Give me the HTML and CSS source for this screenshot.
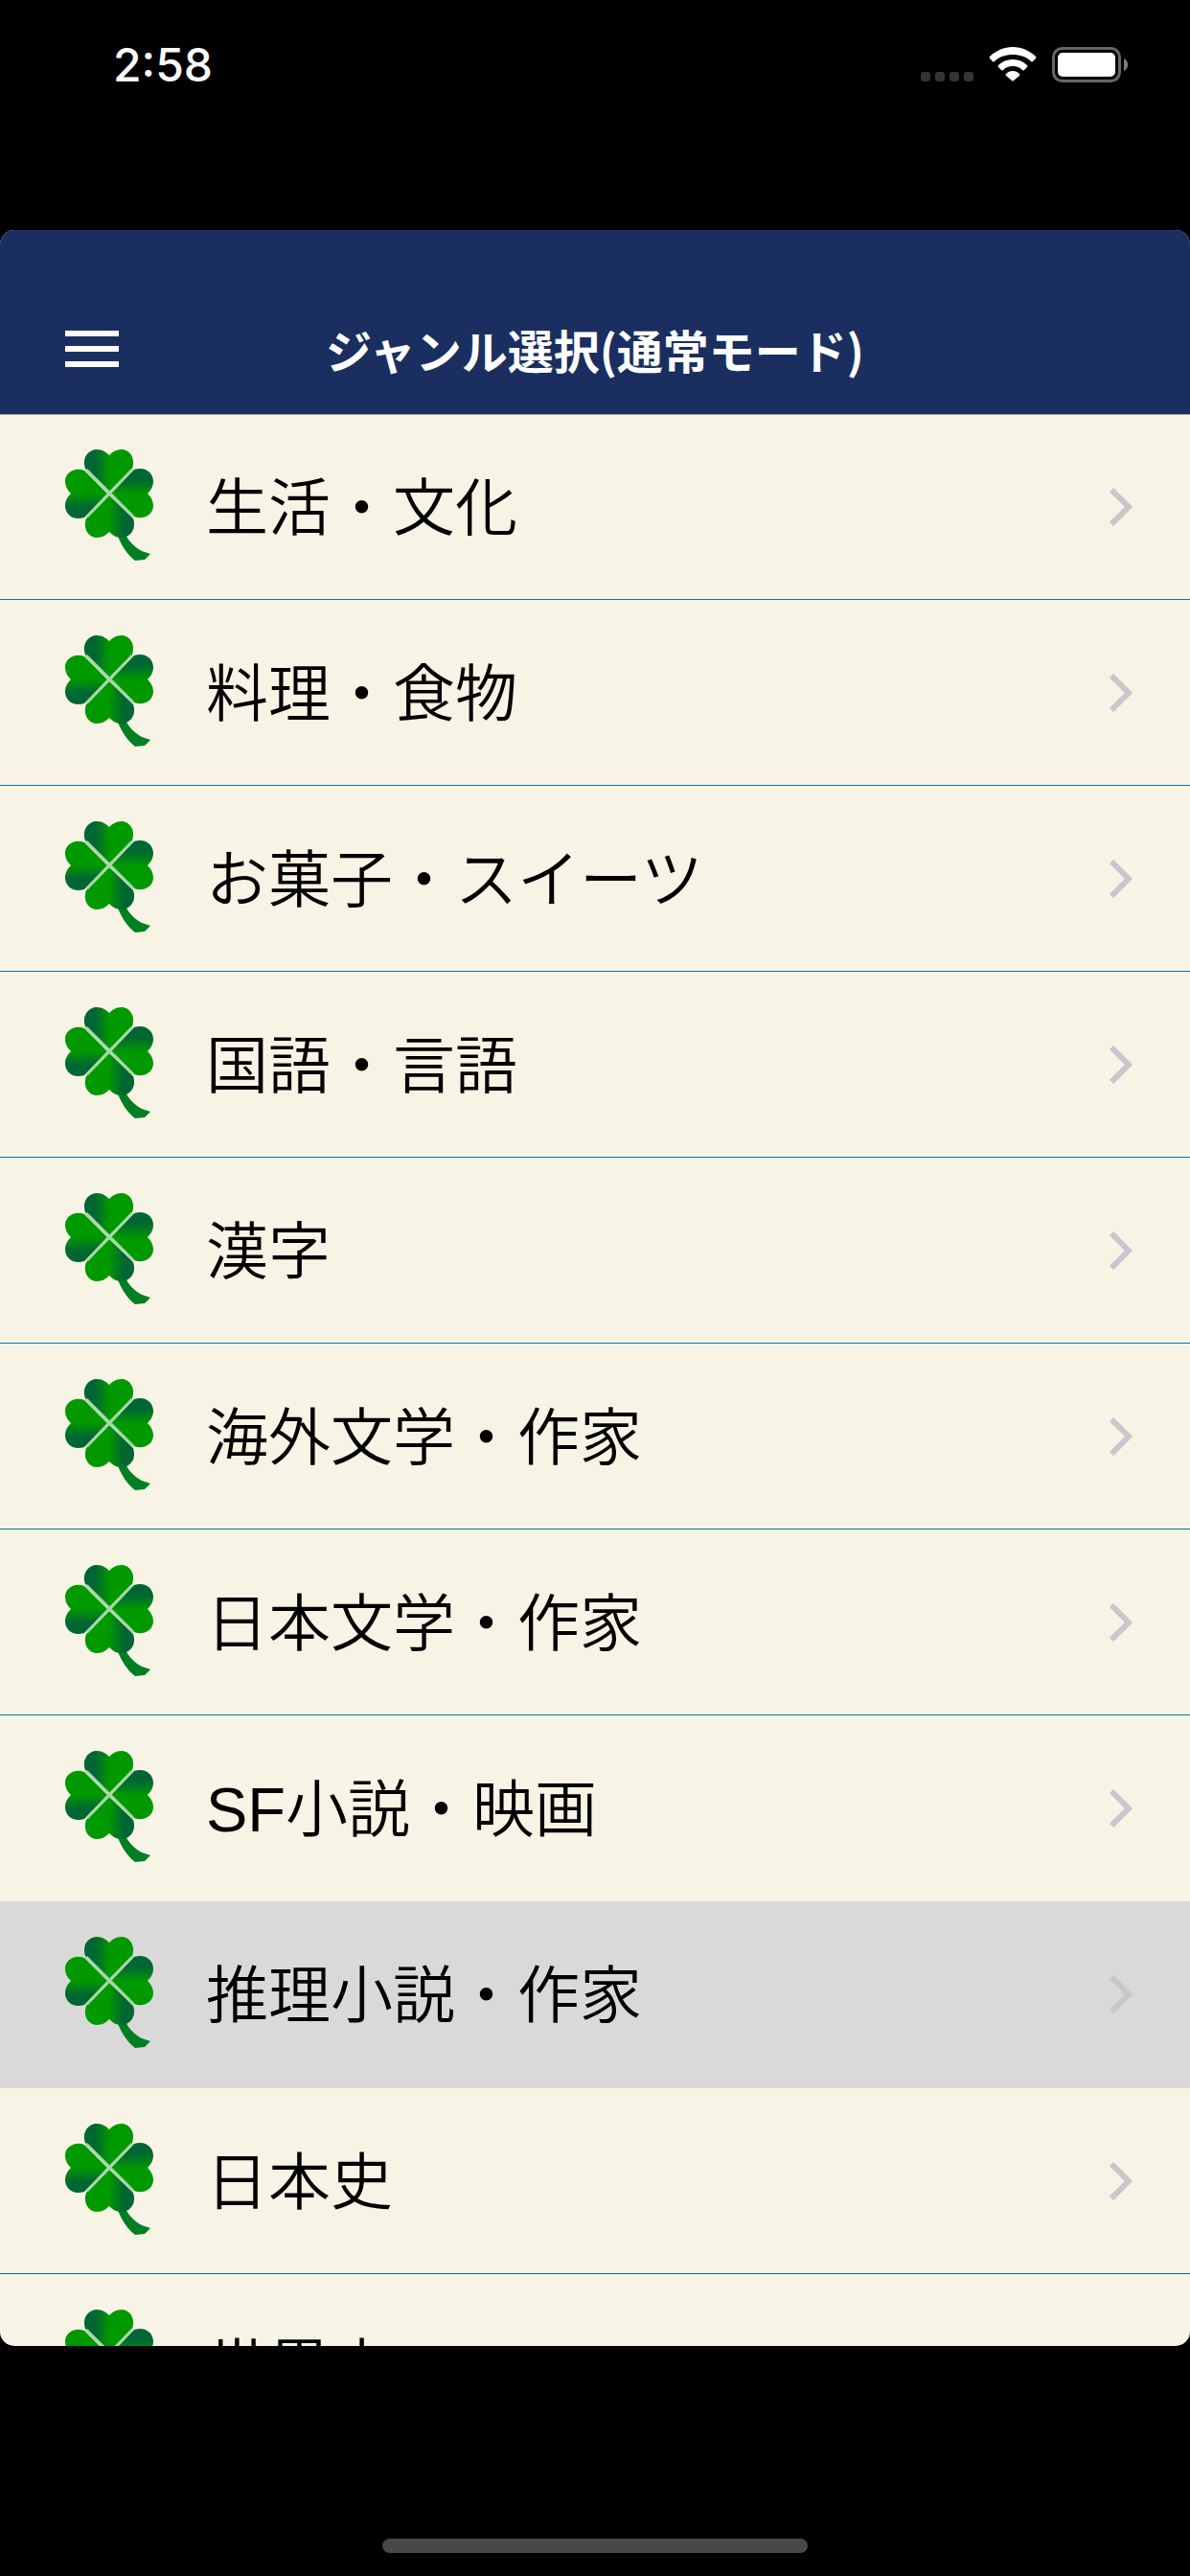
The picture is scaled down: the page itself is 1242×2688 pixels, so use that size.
FILE: index.html
```html
<!DOCTYPE html>
<html lang="ja">
<head>
<meta charset="utf-8">
<meta name="viewport" content="width=device-width, initial-scale=1">
<title>ジャンル選択</title>
<link rel="stylesheet" href="styles.css">
</head>
<body>
<svg class="defs" aria-hidden="true">
  <defs>
    <linearGradient id="leaf-shade" x1="0" x2="1" y1="0" y2="0">
      <stop offset="0.22" stop-color="#006633"/>
      <stop offset="0.52" stop-color="#009900"/>
    </linearGradient>
    <path id="leaf" fill="url(#leaf-shade)" d="M0 -2 L-25 -26 C-29 -38 -21 -46 -13 -46 C-7 -46 -3 -43 0 -40 C3 -43 7 -46 13 -46 C21 -46 28 -37 24 -26 Z"/>
    <symbol id="clover" viewBox="0 0 96 120">
      <path fill="#007f22" d="M55 88 L64 88 C67 96 74 102 81 106 L90 109 L84 115 L74 116 C65 109 59 99 55 88Z"/>
      <g transform="translate(47 46)">
        <use href="#leaf"/>
        <use href="#leaf" transform="rotate(90)"/>
        <use href="#leaf" transform="rotate(180)"/>
        <use href="#leaf" transform="rotate(270)"/>
        <path fill="none" stroke="#a5d8a5" stroke-width="3" d="M-24 -25 L25 24 M24 -25 L-23 24"/>
      </g>
    </symbol>
    <symbol id="chevron" viewBox="0 0 24 40">
      <path d="M2 2 L20 20 L2 38" fill="none" stroke="#c7c7cc" stroke-width="6"/>
    </symbol>
  </defs>
</svg>
<div class="screen">
  <div class="status">
    <time class="clock">2:58</time>
    <div class="indicators">
      <svg class="signal" viewBox="0 0 55 10" aria-label="圏外"><g fill="#333"><rect width="10" height="10" rx="3"/><rect x="15" width="10" height="10" rx="3"/><rect x="30" width="10" height="10" rx="3"/><rect x="45" width="10" height="10" rx="3"/></g></svg>
      <svg class="wifi" viewBox="0 0 50 36" aria-label="Wi-Fi"><g fill="#fff"><path d="M25 0C34 0 43 4 49 10Q50 11 49 12L46 15Q45 16 44 15C39 10 32 8 25 8S11 10 6 15Q5 16 4 15L1 12Q0 11 1 10C7 4 16 0 25 0Z"/><path d="M25 13C31 13 36 15 40 19Q41 20 40 21L37 24Q36 25 35 24C32 21 29 20 25 20S18 21 15 24Q14 25 13 24L10 21Q9 20 10 19C14 15 19 13 25 13Z"/><path d="M25 25C28 25 30 26 32 28Q33 29 32 30L26 35Q25 36 24 35L18 30Q17 29 18 28C20 26 22 25 25 25Z"/></g></svg>
      <svg class="battery" viewBox="0 0 80 38" aria-label="バッテリー"><rect x="1.5" y="1.5" width="69" height="34" rx="9" fill="none" stroke="#666" stroke-width="3"/><rect x="6" y="6" width="60" height="25" rx="5" fill="#fff"/><path d="M75 12Q79 14 79 18.500T75 25Z" fill="#808080"/></svg>
    </div>
  </div>
  <main class="app">
    <header class="bar">
      <button class="menu" type="button" aria-label="メニュー"><span></span><span></span><span></span></button>
      <h1 class="title">ジャンル選択(通常モード)</h1>
    </header>
    <nav class="list">
      <a class="row" href="#life"><svg class="clover"><use href="#clover"/></svg><span class="label">生活・文化</span><svg class="chevron"><use href="#chevron"/></svg></a>
      <a class="row" href="#food"><svg class="clover"><use href="#clover"/></svg><span class="label">料理・食物</span><svg class="chevron"><use href="#chevron"/></svg></a>
      <a class="row" href="#sweets"><svg class="clover"><use href="#clover"/></svg><span class="label">お菓子・スイーツ</span><svg class="chevron"><use href="#chevron"/></svg></a>
      <a class="row" href="#language"><svg class="clover"><use href="#clover"/></svg><span class="label">国語・言語</span><svg class="chevron"><use href="#chevron"/></svg></a>
      <a class="row" href="#kanji"><svg class="clover"><use href="#clover"/></svg><span class="label">漢字</span><svg class="chevron"><use href="#chevron"/></svg></a>
      <a class="row" href="#world-literature"><svg class="clover"><use href="#clover"/></svg><span class="label">海外文学・作家</span><svg class="chevron"><use href="#chevron"/></svg></a>
      <a class="row" href="#japanese-literature"><svg class="clover"><use href="#clover"/></svg><span class="label">日本文学・作家</span><svg class="chevron"><use href="#chevron"/></svg></a>
      <a class="row row-plain" href="#sf"><svg class="clover"><use href="#clover"/></svg><span class="label">SF小説・映画</span><svg class="chevron"><use href="#chevron"/></svg></a>
      <a class="row row-selected" href="#mystery"><svg class="clover"><use href="#clover"/></svg><span class="label">推理小説・作家</span><svg class="chevron"><use href="#chevron"/></svg></a>
      <a class="row" href="#japan-history"><svg class="clover"><use href="#clover"/></svg><span class="label">日本史</span><svg class="chevron"><use href="#chevron"/></svg></a>
      <a class="row" href="#world-history"><svg class="clover"><use href="#clover"/></svg><span class="label">世界史</span><svg class="chevron"><use href="#chevron"/></svg></a>
    </nav>
  </main>
  <footer class="home"><div class="home-bar"></div></footer>
</div>
</body>
</html>
```
FILE: styles.css
```css
* { box-sizing: border-box; }
body {
  margin: 0;
  background: #000;
  font-family: Inter, "Noto Sans CJK JP", sans-serif;
}
.defs { position: absolute; width: 0; height: 0; }
.screen {
  display: flex;
  flex-direction: column;
  height: 100vh;
}
.status {
  flex: none;
  display: flex;
  justify-content: space-between;
  align-items: flex-start;
  height: 240px;
  padding: 40px 64px 0 118px;
  color: #fff;
}
.clock { font-size: 48px; line-height: 56px; font-weight: 500; }
.indicators { display: flex; align-items: flex-end; padding-top: 9px; }
.signal { width: 55px; height: 10px; margin: 0 16px 2px 0; }
.wifi { width: 50px; height: 36px; margin: 0 16px 2px 0; }
.battery { width: 80px; height: 38px; }
.app {
  flex: 1;
  min-height: 0;
  display: flex;
  flex-direction: column;
  overflow: hidden;
  border-radius: 15px;
  background: #f8f4e5;
}
.bar {
  flex: none;
  display: grid;
  grid-template-columns: 56px 1fr 56px;
  align-items: center;
  height: 193px;
  padding: 56px 68px 0;
  background: #1a2f5f;
  border-bottom: 1px solid #a19c93;
}
.menu {
  display: flex;
  flex-direction: column;
  gap: 10px;
  padding: 0;
  border: 0;
  background: none;
}
.menu span { height: 6px; background: #fff; }
.title {
  margin: 0;
  font-family: "Noto Sans CJK JP", sans-serif;
  font-size: 48px;
  line-height: 72px;
  font-weight: 700;
  text-align: center;
  color: #fff;
}
.list { flex: 1; min-height: 0; overflow: hidden; }
.row {
  display: flex;
  align-items: center;
  height: 194px;
  padding: 0 60px 0 67px;
  border-bottom: 1px solid #0078a8;
  color: #000;
  text-decoration: none;
}
.row:first-child { height: 193px; }
.row-plain { border-bottom-color: transparent; }
.row-selected { height: 195px; background: #d9d9d9; border-bottom-color: #d9d9d9; }
.clover { flex: none; width: 96px; height: 120px; }
.label {
  flex: 1;
  margin-left: 52px;
  padding-top: 4px;
  font-family: "Liberation Sans", "Noto Sans CJK JP", sans-serif;
  font-size: 65px;
  line-height: 96px;
  font-weight: 350;
}
.chevron { flex: none; width: 24px; height: 40px; }
.home {
  flex: none;
  display: flex;
  justify-content: center;
  height: 240px;
  padding-top: 201px;
}
.home-bar { width: 444px; height: 15px; border-radius: 8px; background: #484848; }
```
